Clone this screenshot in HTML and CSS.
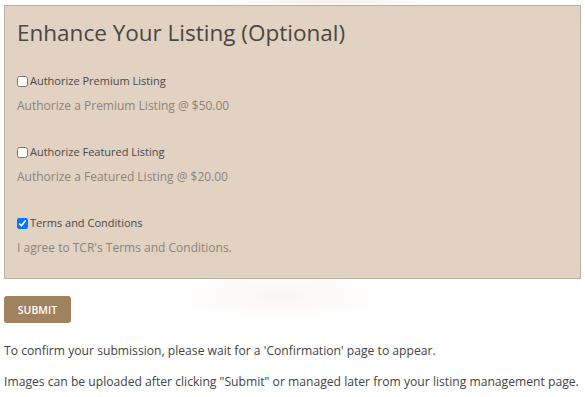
FILE: index.html
```html
<!DOCTYPE html>
<html lang="en">
<head>
    <meta charset="UTF-8">
    <meta name="viewport" content="width=device-width, initial-scale=1.0">
    <title>Enhance Your Listing</title>
    <link rel="stylesheet" href="styles.css">
</head>
<body>
    <form class="listing-form">
        <div class="enhance-box">
            <h2 class="enhance-title">Enhance Your Listing (Optional)</h2>

            <div class="option">
                <label class="option-label">
                    <input type="checkbox" name="premium">Authorize Premium Listing
                </label>
                <p class="option-desc">Authorize a Premium Listing @ $50.00</p>
            </div>

            <div class="option">
                <label class="option-label">
                    <input type="checkbox" name="featured">Authorize Featured Listing
                </label>
                <p class="option-desc">Authorize a Featured Listing @ $20.00</p>
            </div>

            <div class="option">
                <label class="option-label">
                    <input type="checkbox" name="terms" checked>Terms and Conditions
                </label>
                <p class="option-desc">I agree to TCR's Terms and Conditions.</p>
            </div>
        </div>

        <button type="submit" class="submit-btn">Submit</button>

        <p class="note first">To confirm your submission, please wait for a 'Confirmation' page to appear.</p>
        <p class="note">Images can be uploaded after clicking "Submit" or managed later from your listing management page.</p>
    </form>
</body>
</html>
```

FILE: styles.css
```css
* {
    margin: 0;
    padding: 0;
    box-sizing: border-box;
}

body {
    font-family: "Open Sans", "Noto Sans", sans-serif;
    background:
        radial-gradient(ellipse 110px 22px at 280px 296px, rgba(230, 212, 195, 0.22), transparent),
        radial-gradient(ellipse 120px 6px at 330px 2px, rgba(225, 205, 185, 0.3), transparent),
        #fff;
    color: #444;
    padding: 5px 4px;
    min-height: 397px;
}

.listing-form {
    width: 577px;
}

.enhance-box {
    background: #e1d2c2;
    border: 1px solid #bcb0a5;
    padding: 12px 12px 20px;
}

.enhance-title {
    font-size: 22.5px;
    font-weight: 400;
    color: #4a4744;
    line-height: 30px;
    margin-bottom: 24px;
}

.option {
    margin-bottom: 27px;
}

.option:last-child {
    margin-bottom: 0;
}

.option-label {
    display: flex;
    align-items: center;
    font-size: 11px;
    color: #4b4845;
    line-height: 18px;
}

.option-label input {
    width: 11px;
    height: 11px;
    margin: 0 2px 0 0;
}

.option-desc {
    font-size: 12px;
    color: #8c847c;
    margin-top: 6px;
    line-height: 20px;
}

.submit-btn {
    margin-top: 17px;
    background: #a1825f;
    color: #fff;
    border: none;
    border-radius: 3px;
    font-family: inherit;
    font-size: 10.5px;
    font-weight: 600;
    text-transform: uppercase;
    width: 67px;
    height: 27px;
    cursor: pointer;
}

.note {
    font-size: 12.15px;
    color: #444;
    line-height: 18px;
    margin-top: 13px;
}

.note.first {
    margin-top: 19px;
}
```
